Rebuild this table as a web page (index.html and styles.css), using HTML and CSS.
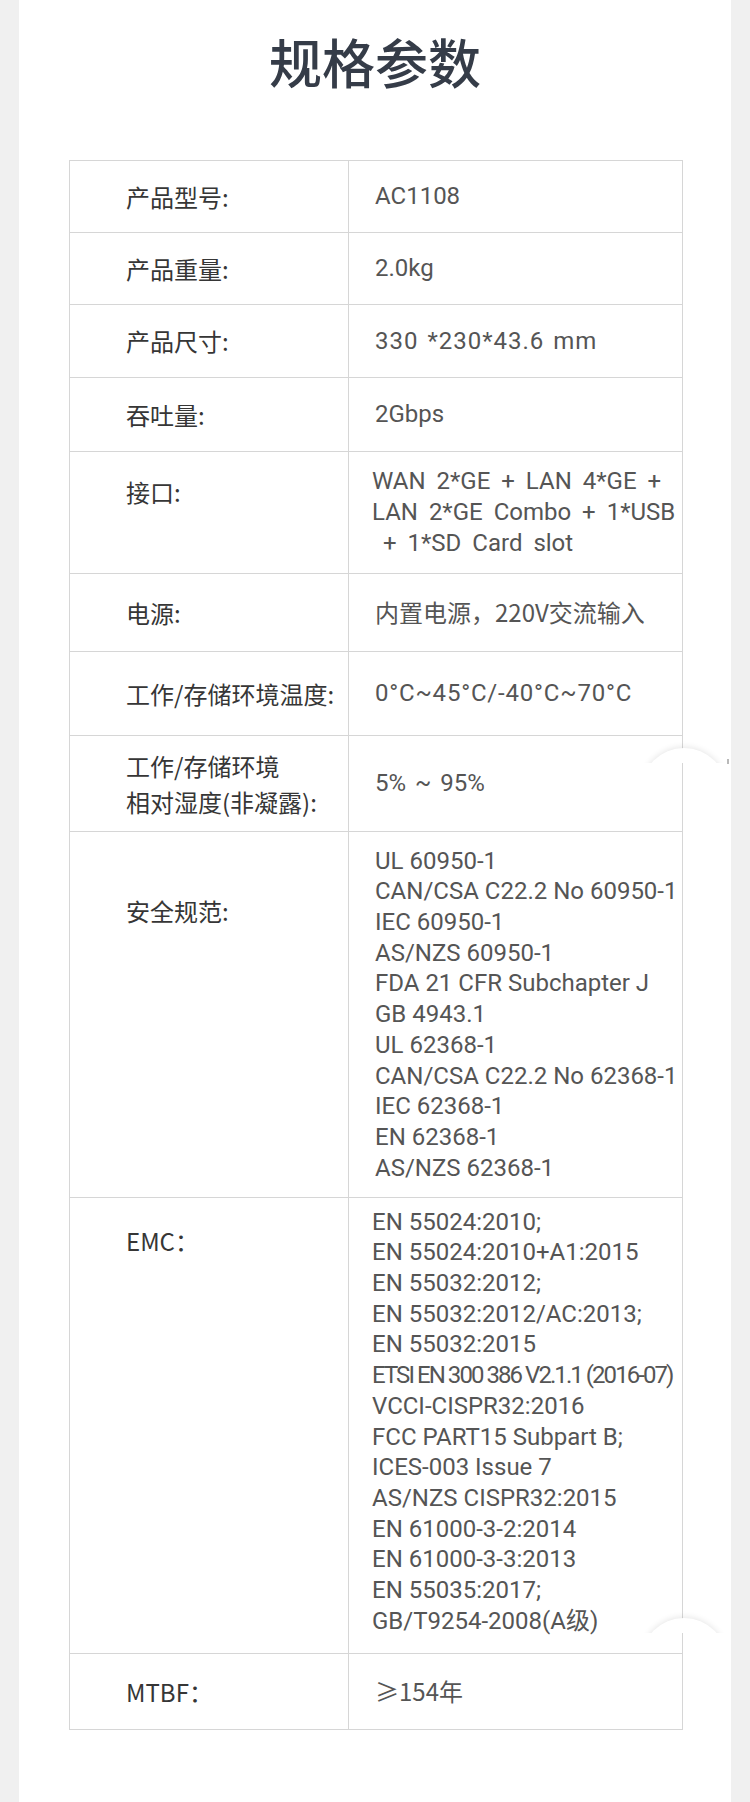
FILE: index.html
```html
<!DOCTYPE html>
<html lang="zh-CN">
<head>
<meta charset="utf-8">
<title>规格参数</title>
<link rel="stylesheet" href="styles.css">
</head>
<body>
<div class="panel">
  <h1 class="title">规格参数</h1>
  <div class="spec">
    <div class="k">产品型号:</div>
    <div class="v">AC1108</div>

    <div class="k">产品重量:</div>
    <div class="v">2.0kg</div>

    <div class="k">产品尺寸:</div>
    <div class="v v-wide">330 *230*43.6 mm</div>

    <div class="k">吞吐量:</div>
    <div class="v">2Gbps</div>

    <div class="k k-top k-iface">接口:</div>
    <div class="v v-tight v-iface">
      <span class="ln">WAN 2*GE + LAN 4*GE +</span>
      <span class="ln">LAN 2*GE Combo + 1*USB</span>
      <span class="ln">&nbsp;+ 1*SD Card slot</span>
    </div>

    <div class="k">电源:</div>
    <div class="v"><span class="cjk">内置电源，220V交流输入</span></div>

    <div class="k">工作/存储环境温度:</div>
    <div class="v v-temp">0°C~45°C/-40°C~70°C</div>

    <div class="k k-two">工作/存储环境<br>相对湿度(非凝露):</div>
    <div class="v v-hum">5% ~ 95%</div>

    <div class="k k-top k-safety">安全规范:</div>
    <div class="v">
      <span class="ln">UL 60950-1</span>
      <span class="ln">CAN/CSA C22.2 No 60950-1</span>
      <span class="ln">IEC 60950-1</span>
      <span class="ln">AS/NZS 60950-1</span>
      <span class="ln">FDA 21 CFR Subchapter J</span>
      <span class="ln">GB 4943.1</span>
      <span class="ln">UL 62368-1</span>
      <span class="ln">CAN/CSA C22.2 No 62368-1</span>
      <span class="ln">IEC 62368-1</span>
      <span class="ln">EN 62368-1</span>
      <span class="ln">AS/NZS 62368-1</span>
    </div>

    <div class="k k-top k-emc">EMC：</div>
    <div class="v v-tight v-emc">
      <span class="ln">EN 55024:2010;</span>
      <span class="ln">EN 55024:2010+A1:2015</span>
      <span class="ln">EN 55032:2012;</span>
      <span class="ln">EN 55032:2012/AC:2013;</span>
      <span class="ln">EN 55032:2015</span>
      <span class="ln ln-cond">ETSI EN 300 386 V2.1.1 (2016-07)</span>
      <span class="ln">VCCI-CISPR32:2016</span>
      <span class="ln">FCC PART15 Subpart B;</span>
      <span class="ln">ICES-003 Issue 7</span>
      <span class="ln">AS/NZS CISPR32:2015</span>
      <span class="ln">EN 61000-3-2:2014</span>
      <span class="ln">EN 61000-3-3:2013</span>
      <span class="ln">EN 55035:2017;</span>
      <span class="ln">GB/T9254-2008(A级)</span>
    </div>

    <div class="k">MTBF：</div>
    <div class="v"><span class="cjk">≥154年</span></div>
  </div>

  <div class="cap cap-1"><div class="cap-disc"></div></div>
  <div class="tick"></div>
  <div class="cap cap-2"><div class="cap-disc"></div></div>
</div>
</body>
</html>
```

FILE: styles.css
```css
html, body {
  margin: 0;
  padding: 0;
}

body {
  background: #f0f0f0;
  font-family: "Noto Sans CJK SC", "Noto Sans", sans-serif;
}

.panel {
  position: relative;
  margin: 0 19px;
  min-height: 1802px;
  padding-top: 31px;
  box-sizing: border-box;
  background: #ffffff;
}

.title {
  margin: 0;
  text-align: center;
  font-size: 53px;
  line-height: 60px;
  font-weight: 500;
  color: #353c48;
}

.spec {
  margin: 69px 48px 0 50px;
  display: grid;
  grid-template-columns: 279px 334px;
  grid-template-rows: 72px 72px 73px 74px 122px 78px 84px 96px 366px 456px 76px;
  border-left: 1px solid #d6d6d6;
  border-top: 1px solid #d6d6d6;
}

.k,
.v {
  box-sizing: border-box;
  border-right: 1px solid #d6d6d6;
  border-bottom: 1px solid #d6d6d6;
  font-size: 24px;
  white-space: nowrap;
}

.k {
  display: flex;
  align-items: center;
  padding-left: 56px;
  line-height: 36px;
  color: #363636;
}

.k-top {
  align-items: flex-start;
}

.k-iface {
  padding-top: 22px;
}

.k-safety {
  padding-top: 61px;
}

.k-emc {
  padding-top: 25px;
}

.v {
  display: flex;
  flex-direction: column;
  justify-content: center;
  padding-left: 26px;
  font-family: Roboto, "Noto Sans CJK SC", sans-serif;
  line-height: 30.7px;
  color: #555555;
}

.cjk {
  font-family: "Noto Sans CJK SC", sans-serif;
}

.v-tight {
  padding-left: 23px;
}

.v-iface {
  word-spacing: 5px;
}

.v-wide {
  letter-spacing: 1px;
  word-spacing: 2px;
}

.v-temp {
  letter-spacing: 0.8px;
}

.v-hum {
  word-spacing: 3px;
}

.v-emc {
  padding-bottom: 8px;
}

.ln {
  display: block;
}

.ln-cond {
  letter-spacing: -1.95px;
}

.cap {
  position: absolute;
  left: 621px;
  width: 90px;
  height: 23px;
  overflow: hidden;
}

.cap-1 {
  top: 740px;
}

.cap-2 {
  top: 1610px;
}

.cap-disc {
  position: absolute;
  top: 8px;
  left: 1px;
  width: 86px;
  height: 86px;
  border-radius: 50%;
  background: #ffffff;
  box-shadow: 0 -1px 6px rgba(0, 0, 0, 0.10);
}

.tick {
  position: absolute;
  left: 708px;
  top: 759px;
  width: 2px;
  height: 5px;
  background: #b9b9b9;
}
```
